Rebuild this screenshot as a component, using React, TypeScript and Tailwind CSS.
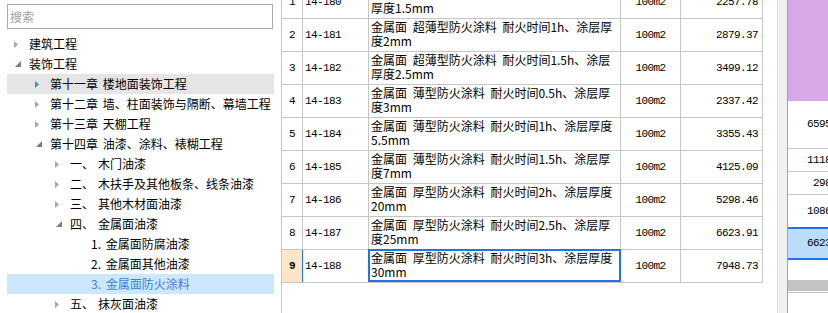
import React from "react"

type Node = {
  label: string
  name?: string
  level: number
  state: "closed" | "open" | "leaf"
  hover?: boolean
  selected?: boolean
}

const tree: Node[] = [
  { label: "建筑工程", level: 0, state: "closed" },
  { label: "装饰工程", level: 0, state: "open" },
  { label: "第十一章 楼地面装饰工程", level: 1, state: "closed", hover: true },
  { label: "第十二章 墙、柱面装饰与隔断、幕墙工程", level: 1, state: "closed" },
  { label: "第十三章 天棚工程", level: 1, state: "closed" },
  { label: "第十四章 油漆、涂料、裱糊工程", level: 1, state: "open" },
  { label: "一、", name: "木门油漆", level: 2, state: "closed" },
  { label: "二、", name: "木扶手及其他板条、线条油漆", level: 2, state: "closed" },
  { label: "三、", name: "其他木材面油漆", level: 2, state: "closed" },
  { label: "四、", name: "金属面油漆", level: 2, state: "open" },
  { label: "1. 金属面防腐油漆", level: 3, state: "leaf" },
  { label: "2. 金属面其他油漆", level: 3, state: "leaf" },
  { label: "3. 金属面防火涂料", level: 3, state: "leaf", selected: true },
  { label: "五、", name: "抹灰面油漆", level: 2, state: "closed" },
]

const rows = [
  { no: 1, code: "14-180", l1: "金属面 超薄型防火涂料 耐火时间0.5h、涂层", l2: "厚度1.5mm", price: "2257.78" },
  { no: 2, code: "14-181", l1: "金属面 超薄型防火涂料 耐火时间1h、涂层厚", l2: "度2mm", price: "2879.37" },
  { no: 3, code: "14-182", l1: "金属面 超薄型防火涂料 耐火时间1.5h、涂层", l2: "厚度2.5mm", price: "3499.12" },
  { no: 4, code: "14-183", l1: "金属面 薄型防火涂料 耐火时间0.5h、涂层厚", l2: "度3mm", price: "2337.42" },
  { no: 5, code: "14-184", l1: "金属面 薄型防火涂料 耐火时间1h、涂层厚度", l2: "5.5mm", price: "3355.43" },
  { no: 6, code: "14-185", l1: "金属面 薄型防火涂料 耐火时间1.5h、涂层厚", l2: "度7mm", price: "4125.09" },
  { no: 7, code: "14-186", l1: "金属面 厚型防火涂料 耐火时间2h、涂层厚度", l2: "20mm", price: "5298.46" },
  { no: 8, code: "14-187", l1: "金属面 厚型防火涂料 耐火时间2.5h、涂层厚", l2: "度25mm", price: "6623.91" },
  { no: 9, code: "14-188", l1: "金属面 厚型防火涂料 耐火时间3h、涂层厚度", l2: "30mm", price: "7948.73", selected: true },
]

const indent = ["pl-0", "pl-[21px]", "pl-[41px]", "pl-[62px]"]
const mono = "font-['Liberation_Mono',monospace] text-[11px] tracking-[-0.6px]"

function Arrow({ state, hover }: { state: Node["state"]; hover?: boolean }) {
  if (state === "leaf") return <span className="w-[22px] shrink-0" />
  if (state === "open")
    return (
      <span className="w-[22px] shrink-0 pl-[8px] flex items-center">
        <svg width="6" height="6" viewBox="0 0 6 6">
          <path d="M6 0 L6 6 L0 6 Z" fill="#7c7c7c" />
        </svg>
      </span>
    )
  return (
    <span className="w-[22px] shrink-0 pl-[7px] flex items-center">
      <svg width="4" height="7" viewBox="0 0 4 7">
        <path d="M0 0 L4 3.5 L0 7 Z" fill={hover ? "#3d8be6" : "#a8a8a8"} />
      </svg>
    </span>
  )
}

function TreePanel() {
  return (
    <div className="w-[281px] shrink-0 pt-[4px] pl-[7px] font-['Noto_Sans_CJK_SC',sans-serif] text-[12px]">
      <div className="w-[266px] h-[25px] border border-[#ababab] flex items-center pl-[2px] text-[#a0a0a0]">搜索</div>
      <div className="mt-[5px] w-[267px]">
        {tree.map((n) => (
          <div
            key={n.label + (n.name ?? "")}
            className={`h-[20px] flex items-center whitespace-pre [word-spacing:2px] ${indent[n.level]} ${
              n.selected ? "bg-[#cce8ff] text-[#3c7fdc]" : n.hover ? "bg-[#e5e5e5] text-black" : "text-black"
            }`}
          >
            <Arrow state={n.state} hover={n.hover} />
            <span>{n.label}</span>
            {n.name && <span className="ml-[4px]">{n.name}</span>}
          </div>
        ))}
      </div>
    </div>
  )
}

function PriceTable() {
  return (
    <div className="w-[496px] shrink-0 h-full border-l border-[#c6c6c6] overflow-hidden">
      <div className="w-[481px] mt-[-14px] text-black">
        {rows.map((r) => (
          <div key={r.code} className="flex h-[33px] border-b border-[#c6c6c6]">
            <div
              className={`w-[21px] shrink-0 border-r flex items-center justify-center ${mono} ${
                r.selected ? "bg-[#fde5c8] border-[#1f74e8] font-bold" : "border-[#c6c6c6]"
              }`}
            >
              {r.no}
            </div>
            <div className={`w-[66px] shrink-0 border-r border-[#c6c6c6] flex items-center pl-[2px] ${mono}`}>{r.code}</div>
            <div className="relative w-[252px] shrink-0 border-r border-[#c6c6c6] pl-[2px] pt-[1px] whitespace-pre font-['Noto_Sans_CJK_SC',sans-serif] text-[12px] leading-[14px] [word-spacing:3px]">
              <div>{r.l1}</div>
              <div>{r.l2}</div>
              {r.selected && <div className="absolute -left-px -top-px -right-px bottom-0 border-2 border-[#1f74e8]" />}
            </div>
            <div className={`w-[60px] shrink-0 border-r border-[#c6c6c6] flex items-center justify-center ${mono}`}>100m2</div>
            <div className={`w-[82px] shrink-0 border-r border-[#c6c6c6] flex items-center justify-end pr-[4px] ${mono}`}>{r.price}</div>
          </div>
        ))}
      </div>
    </div>
  )
}

function SidePanel() {
  const cell = `flex items-center justify-end pr-[3px] ${mono} text-black`
  return (
    <div className="flex-1 h-full overflow-hidden">
      <div className="w-[64px]">
        <div className="h-[101px] bg-[#d9a8e9]" />
        <div className={`h-[48px] border-b border-[#c8c8c8] ${cell}`}>6595.32</div>
        <div className={`h-[23px] border-b border-[#c8c8c8] ${cell}`}>1118.45</div>
        <div className={`h-[23px] border-b border-[#c8c8c8] ${cell}`}>298.60</div>
        <div className={`h-[32px] ${cell}`}>1086.17</div>
        <div className={`h-[33px] border-y-2 border-[#1f74e8] bg-[#bcdcfc] ${cell}`}>6623.91</div>
        <div className="h-[20px]" />
        <div className="h-[11px] bg-[#c3c3c3]" />
        <div className="h-[1px]" />
        <div className="h-[1px] bg-[#c8c8c8]" />
      </div>
    </div>
  )
}

export default function App() {
  return (
    <div className="w-[828px] h-[313px] flex bg-white overflow-hidden">
      <TreePanel />
      <PriceTable />
      <div className="w-[11px] shrink-0 h-full border-l border-r border-l-[#d9d9d9] border-r-[#a3a3a3] bg-[#f0f0f0]" />
      <SidePanel />
    </div>
  )
}
